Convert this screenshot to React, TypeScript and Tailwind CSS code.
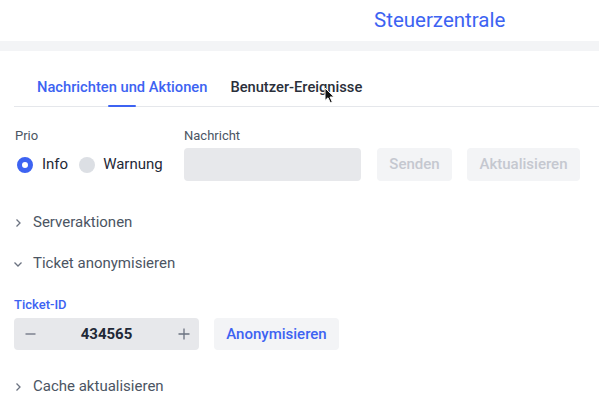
import { useState } from "react";

const blue = "text-[#3d63f2]";

function Chevron({ open }: { open?: boolean }) {
  return (
    <svg width="12" height="12" viewBox="0 0 12 12" className="text-[#6b7280]">
      {open ? (
        <path d="M2.5 4.5 L6 8 L9.5 4.5" fill="none" stroke="currentColor" strokeWidth="1.3" />
      ) : (
        <path d="M4.5 2.5 L8 6 L4.5 9.5" fill="none" stroke="currentColor" strokeWidth="1.3" />
      )}
    </svg>
  );
}

function Section({ title, open, children }: { title: string; open?: boolean; children?: React.ReactNode }) {
  return (
    <div>
      <div className="flex h-[41px] items-center gap-[9px] pl-[12px] text-[15px] text-[#4b5563]">
        <Chevron open={open} />
        <span>{title}</span>
      </div>
      {children}
    </div>
  );
}

export default function App() {
  const [prio, setPrio] = useState("info");
  const [ticket, setTicket] = useState(434565);

  return (
    <div className="relative h-[418px] w-[599px] overflow-hidden bg-white font-['Roboto',sans-serif]">
      <header className="flex h-[41px] items-center pl-[374px]">
        <h1 className={`text-[20.5px] leading-none ${blue}`}>Steuerzentrale</h1>
      </header>
      <div className="h-[10px] bg-[#f3f4f6]" />

      <nav className="ml-[14px] mt-[23px] flex h-[33px] gap-[23px] border-b border-[#e5e7eb] text-[14.7px] font-medium">
        <div className="relative pl-[23px] pt-[2px]">
          <span className={blue}>Nachrichten und Aktionen</span>
          <div className="absolute bottom-[-1px] left-[calc(50%+11px)] h-[2px] w-[28px] -translate-x-1/2 rounded-full bg-[#3d63f2]" />
        </div>
        <div className="pt-[2px] text-[#2a2f3a]">Benutzer-Ereignisse</div>
      </nav>

      <section className="mt-[20px] flex items-end pl-[15px]">
        <div className="w-[169px]">
          <div className="mb-[3px] text-[13px] leading-[18px] text-[#4b5563]">Prio</div>
          <div className="flex h-[33px] items-center text-[15px] text-[#1f2937]">
            <button onClick={() => setPrio("info")} className="flex items-center gap-[9px] pl-[2px]">
              <span
                className={`h-[16px] w-[16px] rounded-full ${
                  prio === "info" ? "border-[5px] border-[#3d63f2] bg-white" : "bg-[#dcdfe4]"
                }`}
              />
              Info
            </button>
            <button onClick={() => setPrio("warn")} className="ml-[11px] flex items-center gap-[8px]">
              <span
                className={`h-[16px] w-[16px] rounded-full ${
                  prio === "warn" ? "border-[5px] border-[#3d63f2] bg-white" : "bg-[#dcdfe4]"
                }`}
              />
              Warnung
            </button>
          </div>
        </div>
        <div>
          <div className="mb-[3px] text-[13px] leading-[18px] text-[#4b5563]">Nachricht</div>
          <input className="h-[33px] w-[177px] rounded-[4px] bg-[#e7e8eb] px-2 text-[15px] outline-none" />
        </div>
        <button className="ml-[16px] h-[33px] w-[75px] rounded-[4px] bg-[#f3f4f6] text-[15px] font-medium text-[#c5c8d0]">
          Senden
        </button>
        <button className="ml-[15px] h-[33px] w-[113px] rounded-[4px] bg-[#f3f4f6] text-[15px] font-medium text-[#c5c8d0]">
          Aktualisieren
        </button>
      </section>

      <div className="mt-[21px]">
        <Section title="Serveraktionen" />
        <Section title="Ticket anonymisieren" open>
          <div className="pl-[14px] pt-[12px]">
            <div className={`mb-[4px] text-[13px] leading-[18px] font-medium ${blue}`}>Ticket-ID</div>
            <div className="flex items-center">
              <div className="flex h-[32px] w-[185px] items-center rounded-[4px] bg-[#e7e8eb] text-[#6b7280]">
                <button onClick={() => setTicket(ticket - 1)} className="flex w-[30px] justify-center pl-[2px]">
                  <svg width="11" height="12" viewBox="0 0 11 12">
                    <path d="M0.5 6 H10.5" stroke="currentColor" strokeWidth="1.3" />
                  </svg>
                </button>
                <div className="flex-1 text-center text-[15px] font-bold text-[#1f2937]">{ticket}</div>
                <button onClick={() => setTicket(ticket + 1)} className="flex w-[30px] justify-center">
                  <svg width="12" height="12" viewBox="0 0 12 12">
                    <path d="M0.5 6 H11.5 M6 0.5 V11.5" stroke="currentColor" strokeWidth="1.3" />
                  </svg>
                </button>
              </div>
              <button className={`ml-[15px] h-[32px] w-[125px] rounded-[4px] bg-[#f3f4f6] text-[15px] font-medium ${blue}`}>
                Anonymisieren
              </button>
            </div>
          </div>
          <div className="h-[16px]" />
        </Section>
        <Section title="Cache aktualisieren" />
      </div>

      <svg className="pointer-events-none absolute left-[324px] top-[87px]" width="12" height="17" viewBox="0 0 12 17">
        <path d="M1 1 L1 13.5 L4 10.8 L6.3 15.8 L8.3 14.9 L6 10 L10.2 10 Z" fill="#111" stroke="#fff" strokeWidth="1" />
      </svg>
    </div>
  );
}
